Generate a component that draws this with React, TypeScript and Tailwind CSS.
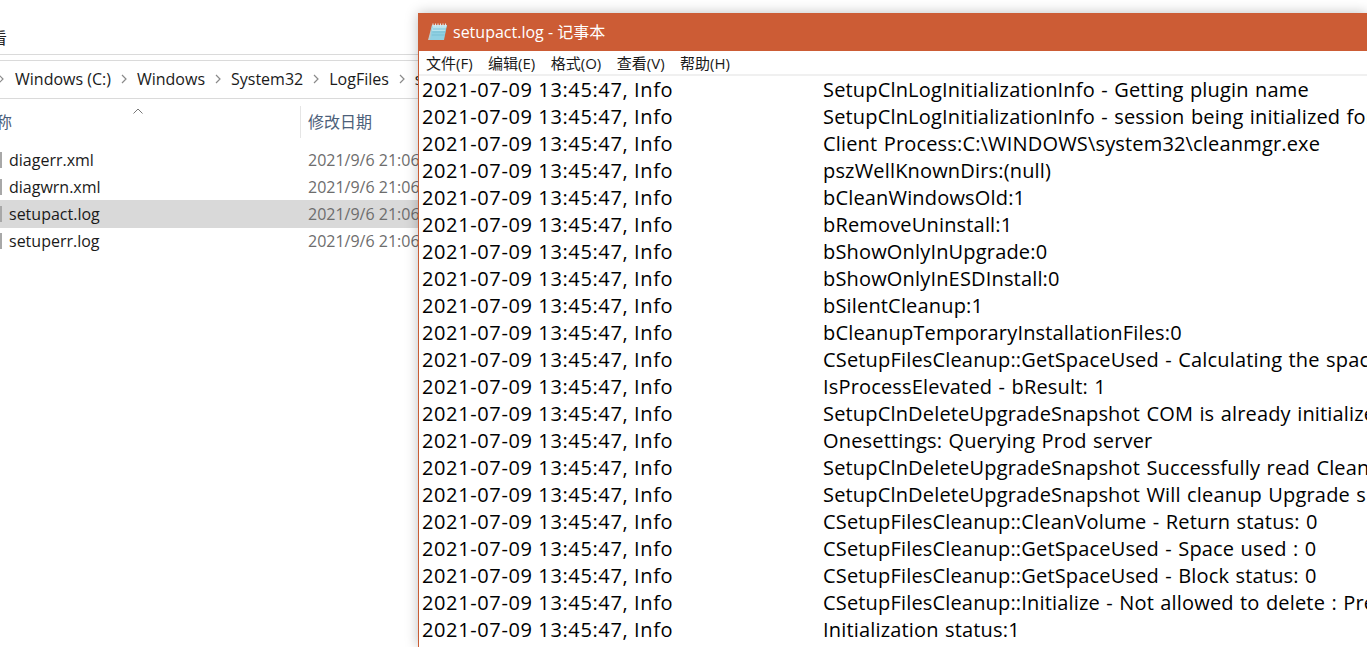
const font = { fontFamily: '"Open Sans","Noto Sans CJK SC",sans-serif' };

const files = [
  { name: "diagerr.xml", selected: false },
  { name: "diagwrn.xml", selected: false },
  { name: "setupact.log", selected: true },
  { name: "setuperr.log", selected: false },
];

const logs = [
  "SetupClnLogInitializationInfo - Getting plugin name",
  "SetupClnLogInitializationInfo - session being initialized for user",
  "Client Process:C:\\WINDOWS\\system32\\cleanmgr.exe",
  "pszWellKnownDirs:(null)",
  "bCleanWindowsOld:1",
  "bRemoveUninstall:1",
  "bShowOnlyInUpgrade:0",
  "bShowOnlyInESDInstall:0",
  "bSilentCleanup:1",
  "bCleanupTemporaryInstallationFiles:0",
  "CSetupFilesCleanup::GetSpaceUsed - Calculating the space used",
  "IsProcessElevated - bResult: 1",
  "SetupClnDeleteUpgradeSnapshot COM is already initialized",
  "Onesettings: Querying Prod server",
  "SetupClnDeleteUpgradeSnapshot Successfully read CleanupSnapshot",
  "SetupClnDeleteUpgradeSnapshot Will cleanup Upgrade snapshot",
  "CSetupFilesCleanup::CleanVolume - Return status: 0",
  "CSetupFilesCleanup::GetSpaceUsed - Space used : 0",
  "CSetupFilesCleanup::GetSpaceUsed - Block status: 0",
  "CSetupFilesCleanup::Initialize - Not allowed to delete : Previous",
  "Initialization status:1",
];

const menus = ["文件(F)", "编辑(E)", "格式(O)", "查看(V)", "帮助(H)"];

function Chevron() {
  return (
    <svg width="6" height="10" viewBox="0 0 6 10" className="shrink-0">
      <path d="M1 1l4 4-4 4" fill="none" stroke="#8a8a8a" strokeWidth="1.2" />
    </svg>
  );
}

function NotepadIcon() {
  return (
    <svg width="20" height="20" viewBox="0 0 20 20" className="shrink-0">
      <path d="M4 3h3L3 18H0z" fill="#c4c9c9" />
      <path d="M4 3h15l-3 15H2z" fill="#8fd0e2" />
      <path d="M5 3h14l-2 6H4z" fill="#b8e4ee" />
      <path d="M5 7h13M4.4 10h13M3.8 13h13" stroke="#74bcd2" strokeWidth="0.8" />
      <path d="M5 1.5v3M7.5 1.5v3M10 1.5v3M12.5 1.5v3M15 1.5v3M17.5 1.5v3" stroke="#e4e9ea" strokeWidth="1.1" />
    </svg>
  );
}

function Explorer() {
  return (
    <div className="w-[418px] shrink-0 h-full overflow-hidden bg-white text-[16px]" style={font}>
      <div className="h-[55px] border-b border-[#dadada] flex items-end pb-[4px]">
        <span className="-ml-[25px] text-[#222]">查看</span>
      </div>
      <div className="h-[5px]" />
      <div className="h-[39px] border-y border-[#dadada] flex items-center pb-[2px] text-[#1a1a1a] whitespace-nowrap">
        <span className="-ml-[2px] mr-[11px]"><Chevron /></span>
        <span>Windows (C:)</span>
        <span className="mx-[10px]"><Chevron /></span>
        <span>Windows</span>
        <span className="mx-[10px]"><Chevron /></span>
        <span>System32</span>
        <span className="mx-[10px]"><Chevron /></span>
        <span>LogFiles</span>
        <span className="mx-[10px]"><Chevron /></span>
        <span>setup</span>
      </div>
      <div className="relative h-[45px] flex items-center text-[#4c607a]">
        <svg width="10" height="6" viewBox="0 0 10 6" className="absolute left-[133px] top-[9px]">
          <path d="M0.5 5.5L5 1l4.5 4.5" fill="none" stroke="#777" strokeWidth="1" />
        </svg>
        <span className="-ml-[20px] w-[320px] shrink-0">名称</span>
        <div className="border-l border-[#e5e5e5] h-[32px] pl-[7px] flex items-center whitespace-nowrap">修改日期</div>
      </div>
      <div className="mt-[2px]">
        {files.map((f) => (
          <div
            key={f.name}
            className={`flex items-center whitespace-nowrap ${f.selected ? "h-[28px] pb-[1px] -mb-[1px] bg-[#d9d9d9]" : "h-[27px]"}`}
          >
            <div className="w-[2px] h-[16px] bg-[#a8a8a8] shrink-0" />
            <span className="ml-[7px] w-[299px] shrink-0 text-[#1a1a1a]">{f.name}</span>
            <span className="text-[#6d6d6d]">2021/9/6 21:06</span>
          </div>
        ))}
      </div>
    </div>
  );
}

function Notepad() {
  return (
    <div className="flex-1 min-w-0 h-[634px] mt-[13px] bg-white border-l border-[#c95d35] shadow-[0_0_12px_rgba(0,0,0,0.25)] overflow-hidden" style={font}>
      <div className="h-[38px] bg-[#cc5c35] flex items-center pl-[9px] gap-[5px] text-white text-[16px] whitespace-nowrap">
        <NotepadIcon />
        <span>setupact.log - 记事本</span>
      </div>
      <div className="h-[25px] border-b-2 border-[#f0f0f0] flex items-center pt-[1px] pl-[7px] gap-[15.5px] text-[15px] text-[#1a1a1a] whitespace-nowrap">
        {menus.map((m) => (
          <span key={m}>{m}</span>
        ))}
      </div>
      <div className="pl-[3px] text-[20px] leading-[27px] text-black whitespace-nowrap">
        {logs.map((l, i) => (
          <div key={i} className="flex">
            <span className="w-[401px] shrink-0 tracking-[0.62px]">2021-07-09 13:45:47, Info</span>
            <span className="tracking-[0.17px] [word-spacing:1px]">{l}</span>
          </div>
        ))}
      </div>
    </div>
  );
}

export default function App() {
  return (
    <div className="w-[1367px] h-[647px] flex overflow-hidden bg-white">
      <Explorer />
      <Notepad />
    </div>
  );
}
